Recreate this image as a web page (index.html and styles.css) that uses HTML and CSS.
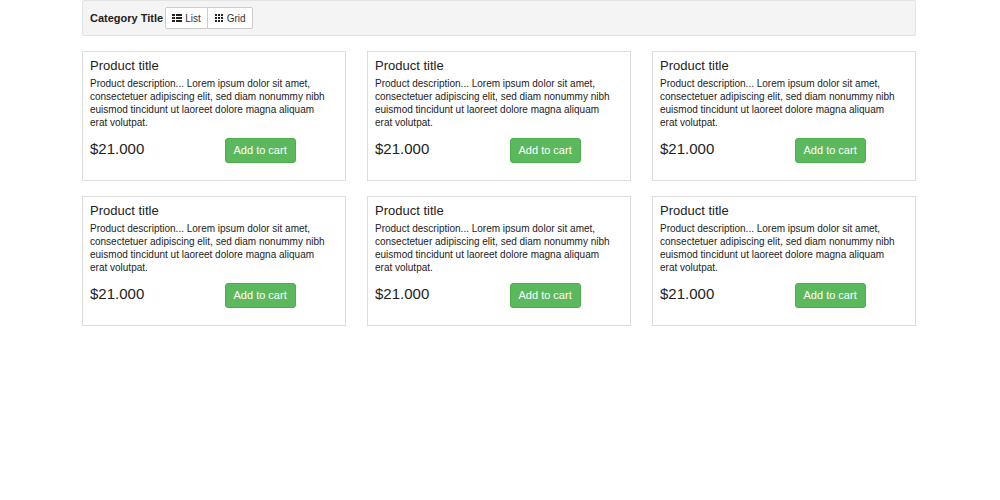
FILE: index.html
```html
<!DOCTYPE html>
<html lang="en">
<head>
    <meta charset="utf-8">
    <title>Category Title</title>
    <meta name="viewport" content="width=device-width, initial-scale=1">
    <link rel="stylesheet" href="styles.css">
</head>
<body>
    <div class="container">
        <div class="well">
            <strong>Category Title</strong>
            <div class="btn-group">
                <button type="button" class="btn-view" id="list">
                    <svg class="icon" viewBox="0 0 10 10"><path d="M0 1h3v2H0zM4 1h6v2H4zM0 4h3v2H0zM4 4h6v2H4zM0 7h3v2H0zM4 7h6v2H4z"/></svg>List
                </button>
                <button type="button" class="btn-view" id="grid">
                    <svg class="icon" viewBox="0 0 10 10"><path d="M1 1h2v2H1zM4 1h2v2H4zM7 1h2v2H7zM1 4h2v2H1zM4 4h2v2H4zM7 4h2v2H7zM1 7h2v2H1zM4 7h2v2H4zM7 7h2v2H7z"/></svg>Grid
                </button>
            </div>
        </div>

        <div id="products" class="products">
            <div class="item">
                <h4>Product title</h4>
                <p class="description">Product description... Lorem ipsum dolor sit amet, consectetuer adipiscing elit, sed diam nonummy nibh euismod tincidunt ut laoreet dolore magna aliquam erat volutpat.</p>
                <div class="row">
                    <p class="price">$21.000</p>
                    <div><a class="btn-cart" href="#">Add to cart</a></div>
                </div>
            </div>
            <div class="item">
                <h4>Product title</h4>
                <p class="description">Product description... Lorem ipsum dolor sit amet, consectetuer adipiscing elit, sed diam nonummy nibh euismod tincidunt ut laoreet dolore magna aliquam erat volutpat.</p>
                <div class="row">
                    <p class="price">$21.000</p>
                    <div><a class="btn-cart" href="#">Add to cart</a></div>
                </div>
            </div>
            <div class="item">
                <h4>Product title</h4>
                <p class="description">Product description... Lorem ipsum dolor sit amet, consectetuer adipiscing elit, sed diam nonummy nibh euismod tincidunt ut laoreet dolore magna aliquam erat volutpat.</p>
                <div class="row">
                    <p class="price">$21.000</p>
                    <div><a class="btn-cart" href="#">Add to cart</a></div>
                </div>
            </div>
            <div class="item">
                <h4>Product title</h4>
                <p class="description">Product description... Lorem ipsum dolor sit amet, consectetuer adipiscing elit, sed diam nonummy nibh euismod tincidunt ut laoreet dolore magna aliquam erat volutpat.</p>
                <div class="row">
                    <p class="price">$21.000</p>
                    <div><a class="btn-cart" href="#">Add to cart</a></div>
                </div>
            </div>
            <div class="item">
                <h4>Product title</h4>
                <p class="description">Product description... Lorem ipsum dolor sit amet, consectetuer adipiscing elit, sed diam nonummy nibh euismod tincidunt ut laoreet dolore magna aliquam erat volutpat.</p>
                <div class="row">
                    <p class="price">$21.000</p>
                    <div><a class="btn-cart" href="#">Add to cart</a></div>
                </div>
            </div>
            <div class="item">
                <h4>Product title</h4>
                <p class="description">Product description... Lorem ipsum dolor sit amet, consectetuer adipiscing elit, sed diam nonummy nibh euismod tincidunt ut laoreet dolore magna aliquam erat volutpat.</p>
                <div class="row">
                    <p class="price">$21.000</p>
                    <div><a class="btn-cart" href="#">Add to cart</a></div>
                </div>
            </div>
        </div>
    </div>
</body>
</html>
```
FILE: styles.css
```css
* { box-sizing: border-box; }
body { margin: 0; font-family: "Liberation Sans", Arial, sans-serif; font-size: 10px; line-height: 13px; color: #222; background: #fff; }
.container { max-width: 1000px; margin: 0 auto; padding: 0 84px 0 82px; }

.well { display: flex; align-items: center; gap: 2px; padding: 6px 7px; margin-bottom: 15px; background: #f4f4f4; border: 1px solid #e3e3e3; border-radius: 2px; }
.well strong { font-size: 11px; }
.btn-group { display: flex; }
.btn-view { display: flex; align-items: center; gap: 3px; height: 22px; padding: 0 6px; font: inherit; color: #333; background: #fff; border: 1px solid #ccc; cursor: pointer; }
.btn-view:first-child { border-radius: 2px 0 0 2px; }
.btn-view:last-child { border-radius: 0 2px 2px 0; margin-left: -1px; }
.icon { width: 10px; height: 10px; fill: #222; }

.products { display: grid; grid-template-columns: repeat(3, 1fr); gap: 15px 21px; }
.item { padding: 7px 7px 17px; border: 1px solid #ddd; }
h4 { margin: 0 0 4px; font-size: 13px; font-weight: 500; line-height: 14px; }
.description { margin: 0 0 9px; padding-right: 7px; }
.row { display: grid; grid-template-columns: 1fr 1fr; gap: 21px; }
.price { margin: 0; font-size: 15px; line-height: 22px; }
.btn-cart { display: inline-block; padding: 5px 8px; font-size: 11px; color: #fff; background: #5cb85c; border: 1px solid #4cae4c; border-radius: 3px; text-decoration: none; }
```
